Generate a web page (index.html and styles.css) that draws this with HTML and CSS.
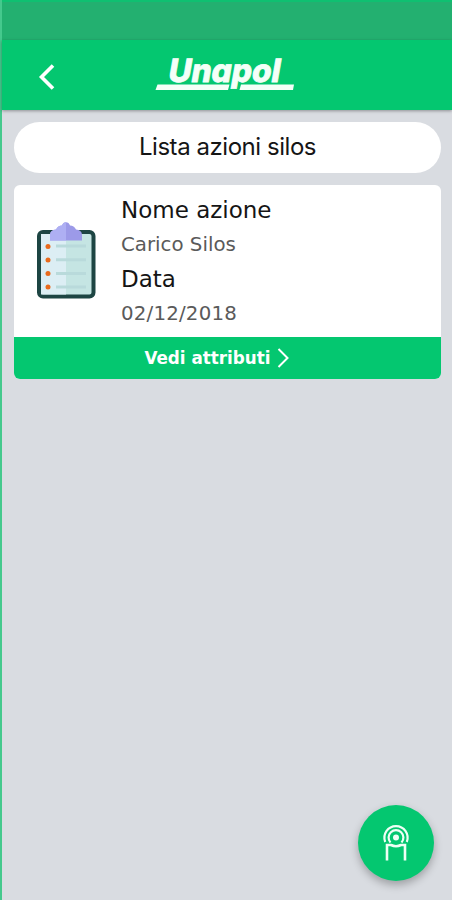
FILE: index.html
```
<!DOCTYPE html>
<html lang="it">
<head>
    <meta charset="UTF-8">
    <meta name="viewport" content="width=device-width, initial-scale=1.0">
    <title>Unapol - Lista azioni silos</title>
    <link rel="stylesheet" href="styles.css">
</head>
<body>
    <div class="app">
        <div class="status-bar"></div>
        <header class="nav">
            <a href="#" class="back" aria-label="Indietro">
                <svg width="20" height="30" viewBox="0 0 20 30">
                    <path d="M16 3.500 L4.500 15 L16 26.500" fill="none" stroke="#fff" stroke-width="3.600"/>
                </svg>
            </a>
            <svg class="logo" width="144" height="40" viewBox="0 0 144 40" aria-label="Unapol">
                <g fill="#f4fff8">
                    <path d="M5.500 32.500 H77.500 L76 38 H3.500 Z M89 32.500 H142 L141 38 H87.500 Z"/>
                    <g transform="translate(15 29.500) skewX(-10)">
                        <text class="logo-text" x="0" y="0" textLength="112" lengthAdjust="spacingAndGlyphs">Unapol</text>
                    </g>
                </g>
            </svg>
        </header>

        <main class="content">
            <h1 class="title">Lista azioni silos</h1>

            <div class="card">
                <div class="card-body">
                    <svg class="clipboard" width="60" height="78" viewBox="0 0 60 78">
                        <rect x="2" y="11" width="54.500" height="64.500" rx="4" fill="#c5e5e3" stroke="#1d4543" stroke-width="4"/>
                        <path d="M4 13 H29 V73.500 H4 Z" fill="#dceef4"/>
                        <path d="M19 23.500h30v3H19zM19 37.200h30v3H19zM19 50.900h30v3H19zM19 64.500h30v3H19z" fill="#b9dadb"/>
                        <path d="M13 19.500 V14 Q13 9 19 8.500 Q21 4.500 25 4.500 C26 0 32 0 33 4.500 Q37 4.500 39 8.500 Q45 9 45 14 V19.500 Z" fill="#9c9ae8"/>
                        <path d="M13 19.500 V14 Q13 9 19 8.500 Q21 4.500 25 4.500 Q26 1.200 29 1.200 V19.500 Z" fill="#aeaff3"/>
                        <g fill="#e96a1c">
                            <circle cx="11" cy="25.500" r="2.500"/>
                            <circle cx="11" cy="39" r="2.500"/>
                            <circle cx="11" cy="52.500" r="2.500"/>
                            <circle cx="11" cy="66" r="2.500"/>
                        </g>
                    </svg>
                    <div class="details">
                        <p class="label">Nome azione</p>
                        <p class="value">Carico Silos</p>
                        <p class="label">Data</p>
                        <p class="value date">02/12/2018</p>
                    </div>
                </div>
                <a href="#" class="btn">
                    <span>Vedi attributi</span>
                    <svg width="14" height="22" viewBox="0 0 14 22">
                        <path d="M2.500 2 L11.500 11 L2.500 20" fill="none" stroke="#fff" stroke-width="2"/>
                    </svg>
                </a>
            </div>
        </main>

        <button class="fab" aria-label="Leggi tag">
            <svg width="32" height="40" viewBox="0 0 32 40">
                <g fill="none" stroke="#effff5" stroke-width="2.200">
                    <path d="M5.200 19 A11.600 11.600 0 1 1 26.800 19"/>
                    <path d="M10.500 19.500 A7.400 7.400 0 1 1 21.500 19.500"/>
                    <path d="M7 37.500 V22 H11 Q16 24.500 21 22 H25 V37.500" stroke-width="2.600"/>
                </g>
                <circle cx="16" cy="14.500" r="3" fill="#effff5"/>
            </svg>
        </button>
    </div>
</body>
</html>
```
FILE: styles.css
```
* {
    box-sizing: border-box;
}

body {
    margin: 0;
    background-color: #d9dce1;
    font-family: "DejaVu Sans", sans-serif;
    color: #151515;
}

.app {
    min-height: 100vh;
    border-left: 2px solid #45c98d;
}

.status-bar {
    height: 40px;
    background-color: #23b070;
    border-top: 2px solid #0fc071;
}

.nav {
    display: flex;
    align-items: flex-start;
    height: 70px;
    padding-top: 12px;
    background-color: #04c770;
    box-shadow: 0 1px 3px rgba(0, 0, 0, 0.35);
}

.back {
    height: 30px;
    margin: 10px 0 0 35px;
}

.logo {
    margin-left: 95px;
}

.logo-text {
    font-family: Inter, sans-serif;
    font-size: 32px;
    font-weight: 800;
    font-feature-settings: "cv11";
    stroke: #f4fff8;
    stroke-width: 0.8px;
}

.content {
    padding: 12px 11px 0 12px;
}

.title {
    height: 51px;
    margin: 0 0 12px;
    border-radius: 26px;
    background-color: #fff;
    font-family: Inter, sans-serif;
    font-size: 24px;
    font-weight: 400;
    letter-spacing: -0.45px;
    line-height: 49px;
    text-align: center;
}

.card {
    border-radius: 6px;
    overflow: hidden;
    background-color: #fff;
}

.card-body {
    display: flex;
    height: 152px;
    padding: 8px 0 0 23px;
}

.clipboard {
    margin-top: 28px;
}

.details {
    margin-left: 24px;
}

.details p {
    margin: 0;
    height: 34.6px;
    line-height: 35px;
}

.details .label {
    font-size: 23px;
}

.details .value {
    font-size: 19.8px;
    line-height: 33px;
    color: #5a5a5a;
}

.details .date {
    line-height: 34px;
    letter-spacing: 0.2px;
}

.btn {
    display: flex;
    align-items: center;
    justify-content: center;
    gap: 5px;
    height: 42px;
    padding-right: 21px;
    background-color: #04c770;
    color: #fff;
    font-size: 16.8px;
    font-weight: bold;
    text-decoration: none;
}

.fab {
    position: fixed;
    right: 18px;
    bottom: 19px;
    display: flex;
    align-items: center;
    justify-content: center;
    width: 76px;
    height: 76px;
    padding: 0;
    border: none;
    border-radius: 50%;
    background-color: #04c770;
    box-shadow: 0 4px 8px rgba(0, 0, 0, 0.28);
}
```
